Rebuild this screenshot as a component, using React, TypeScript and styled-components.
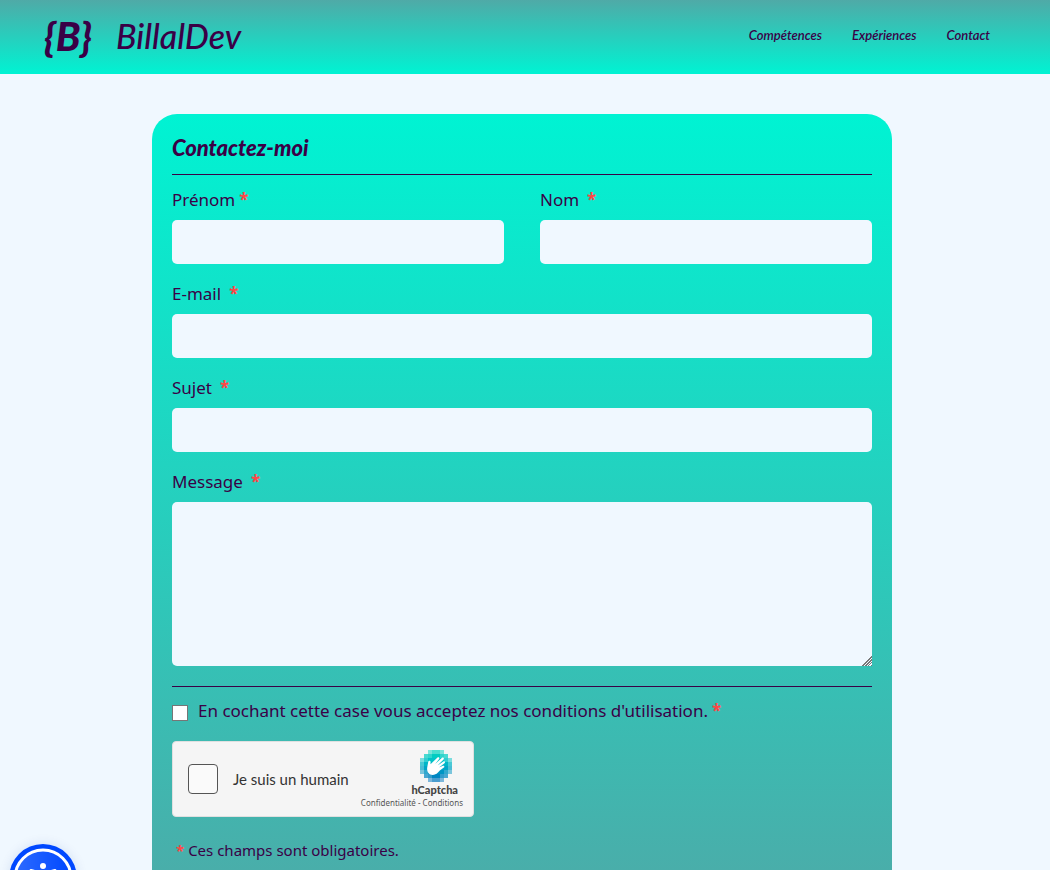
import React from "react";
import styled, { createGlobalStyle } from "styled-components";

const ink = "#3a0046";
const paper = "#f0f8ff";
const mint = "#00f3d3";

const GlobalStyle = createGlobalStyle`
  *, *::before, *::after { box-sizing: border-box; }
  body {
    margin: 0;
    background: ${paper};
    color: ${ink};
    font-family: "Noto Sans", sans-serif;
  }
`;

const Page = styled.div`
  display: flex;
  flex-direction: column;
  min-height: 100vh;
`;

const Header = styled.header`
  display: flex;
  align-items: center;
  justify-content: space-between;
  height: 74px;
  padding: 0 60px 0 44px;
  background: linear-gradient(#4faaa7, ${mint});
  font-family: Lato, sans-serif;
  font-style: italic;
`;

const Brand = styled.a`
  display: flex;
  align-items: center;
  gap: 24px;
  padding-bottom: 2px;
  color: ${ink};
  font-size: 34px;
  line-height: 40px;
  text-decoration: none;
`;

const Monogram = styled.span`
  font-size: 40px;
  font-weight: 900;
`;

const BrandName = styled.span`
  font-weight: 500;
`;

const Nav = styled.nav`
  display: flex;
  gap: 30px;
  padding-bottom: 4px;
`;

const NavLink = styled.a`
  color: ${ink};
  font-size: 13px;
  font-weight: 600;
  line-height: 20px;
  text-decoration: none;
`;

const Main = styled.main`
  display: flex;
  flex: 1;
  justify-content: center;
  padding: 40px 26px 0 20px;
`;

const Form = styled.form`
  width: 100%;
  max-width: 740px;
  padding: 20px 20px 8px;
  border-radius: 25px 25px 0 0;
  background: linear-gradient(${mint}, #49aeaa);
`;

const Title = styled.h1`
  margin: 0;
  padding-bottom: 12px;
  border-bottom: 1px solid ${ink};
  font-family: Lato, sans-serif;
  font-size: 22px;
  font-style: italic;
  font-weight: 900;
  line-height: 28px;
`;

const Fields = styled.div`
  display: grid;
  grid-template-columns: 1fr 1fr;
  gap: 16px 36px;
  padding: 11px 0 20px;
  border-bottom: 1px solid ${ink};
`;

const Field = styled.div<{ $wide?: boolean }>`
  display: flex;
  flex-direction: column;
  gap: 6px;
  grid-column: ${(p) => (p.$wide ? "1 / -1" : "auto")};
`;

const Label = styled.label<{ $gap?: number }>`
  display: flex;
  gap: ${(p) => p.$gap ?? 8}px;
  font-size: 17px;
  line-height: 28px;
`;

const Star = styled.span`
  color: #ff4646;
  font-weight: 700;
`;

const TextInput = styled.input`
  width: 100%;
  height: 44px;
  padding: 0 12px;
  border: 0;
  border-radius: 5px;
  background: ${paper};
  color: ${ink};
  font: inherit;
`;

const TextArea = styled.textarea`
  display: block;
  width: 100%;
  height: 164px;
  padding: 12px;
  border: 0;
  border-radius: 5px;
  background: ${paper};
  color: ${ink};
  font: inherit;
  resize: vertical;
  &::-webkit-resizer {
    background:
      linear-gradient(135deg, ${paper} 63%, transparent 63%),
      repeating-linear-gradient(135deg, #777 0 1px, ${paper} 1px 2px);
  }
`;

const Terms = styled.div`
  display: flex;
  align-items: center;
  gap: 10px;
  padding-top: 12px;
`;

const TermsBox = styled.input`
  appearance: none;
  flex: none;
  width: 16px;
  height: 16px;
  margin: 3px 0 0;
  border: 1px solid #767676;
  background: #fff;
  &:checked { background: ${ink}; }
`;

const TermsLabel = styled.label`
  display: flex;
  gap: 4px;
  font-size: 17px;
  line-height: 24px;
`;

const Captcha = styled.div`
  display: flex;
  align-items: center;
  width: 302px;
  height: 76px;
  margin: 18px 0 22px;
  padding: 0 10px 0 15px;
  border: 1px solid #e0e0e0;
  border-radius: 4px;
  background: #f5f5f5;
  color: #444;
`;

const CaptchaBox = styled.input`
  appearance: none;
  flex: none;
  width: 30px;
  height: 30px;
  margin: 0 15px 0 0;
  border: 1px solid #555;
  border-radius: 4px;
  background: #fafafa;
  &:checked { background: #00838f; }
`;

const CaptchaLabel = styled.label`
  flex: 1;
  font-family: Lato, sans-serif;
  font-size: 15px;
  white-space: nowrap;
  color: #333;
`;

const CaptchaBrand = styled.div`
  display: flex;
  flex-direction: column;
  align-items: flex-end;
  padding-bottom: 2px;
`;

const CaptchaLogo = styled.svg`
  margin-right: 11px;
`;

const CaptchaName = styled.span`
  margin-right: 5px;
  font-family: Lato, sans-serif;
  font-size: 11px;
  font-weight: 900;
  line-height: 16px;
`;

const CaptchaLinks = styled.span`
  font-size: 8px;
  line-height: 9px;
  white-space: nowrap;
`;

const CaptchaLink = styled.a`
  color: #555;
  text-decoration: none;
`;

const Note = styled.p`
  display: flex;
  gap: 4px;
  margin: 0;
  padding-left: 4px;
  font-size: 15px;
  line-height: 22px;
`;

const AccessButton = styled.button`
  position: fixed;
  left: 9px;
  bottom: -42px;
  width: 68px;
  height: 68px;
  padding: 0;
  border: 0;
  border-radius: 50%;
  background: none;
  box-shadow: 0 0 12px rgba(0, 60, 160, 0.12);
`;

/* Opacity of each 4px cell in the round mosaic, 0 meaning no cell. */
const mosaic = [
  [0, 0, 5, 7, 7, 5, 0, 0],
  [0, 7, 8, 10, 10, 8, 7, 0],
  [5, 8, 10, 10, 10, 10, 8, 5],
  [7, 10, 10, 10, 10, 10, 10, 7],
  [7, 10, 10, 10, 10, 10, 10, 7],
  [5, 8, 10, 10, 10, 10, 8, 5],
  [0, 7, 8, 10, 10, 8, 7, 0],
  [0, 0, 5, 7, 7, 5, 0, 0],
];
const rowColours = ["#00d4bf", "#00cdc2", "#00c4c8", "#00b6c8", "#00a5c7", "#0095c4", "#0086c2", "#0078bf"];

function HandLogo() {
  return (
    <CaptchaLogo width="32" height="32" viewBox="0 0 32 32" shapeRendering="auto" aria-hidden="true">
      {mosaic.map((row, y) =>
        row.map((o, x) =>
          o ? <rect key={`${x}-${y}`} x={x * 4} y={y * 4} width="4" height="4" fill={rowColours[y]} opacity={o / 10} /> : null
        )
      )}
      <path
        d="M7.2 17.5 8.3 11.6C8.6 10.2 10.6 10.4 10.6 11.9L10.5 14.2 17.5 7.5C18.6 6.6 20 7.8 19.1 9L15.2 13.9 22 7.8C23.2 6.8 24.6 8.2 23.6 9.4L17.6 15.4 23.4 11.5C24.7 10.8 25.6 12.3 24.5 13.2L19 17.5 22.9 15.8C24.2 15.3 24.9 16.8 23.8 17.6L19.8 20.6C17.6 23.3 15.8 25 12.8 25 8.8 25 6.6 21.8 7.2 17.5Z"
        fill="#fff"
      />
    </CaptchaLogo>
  );
}

function AccessIcon() {
  return (
    <svg width="68" height="68" viewBox="0 0 68 68" aria-hidden="true">
      <defs>
        <linearGradient id="disc" x1="0" y1="0" x2="1" y2="0">
          <stop offset="0" stopColor="#2d6bff" />
          <stop offset="1" stopColor="#0048ff" />
        </linearGradient>
      </defs>
      <circle cx="34" cy="34" r="34" fill="#0048ff" />
      <circle cx="34" cy="34" r="28" fill="url(#disc)" stroke="#fff" strokeWidth="3" />
      <circle cx="34" cy="22" r="3" fill="#fff" />
      <path
        d="M22 26.5 31 29H37L46 26.5M31 29V37L27 49M37 29V37L41 49M31 37H37"
        fill="none"
        stroke="#fff"
        strokeWidth="3"
        strokeLinecap="round"
        strokeLinejoin="round"
      />
    </svg>
  );
}

const fields = [
  { id: "prenom", label: "Prénom", gap: 4, type: "text" },
  { id: "nom", label: "Nom", type: "text" },
  { id: "email", label: "E-mail", wide: true, type: "email" },
  { id: "sujet", label: "Sujet", wide: true, type: "text" },
];

export default function App() {
  return (
    <Page>
      <GlobalStyle />
      <Header>
        <Brand href="#">
          <Monogram>{"{B}"}</Monogram>
          <BrandName>BillalDev</BrandName>
        </Brand>
        <Nav>
          <NavLink href="#competences">Compétences</NavLink>
          <NavLink href="#experiences">Expériences</NavLink>
          <NavLink href="#contact">Contact</NavLink>
        </Nav>
      </Header>
      <Main>
        <Form id="contact">
          <Title>Contactez-moi</Title>
          <Fields>
            {fields.map((f) => (
              <Field key={f.id} $wide={f.wide}>
                <Label htmlFor={f.id} $gap={f.gap}>
                  {f.label}
                  <Star>*</Star>
                </Label>
                <TextInput id={f.id} type={f.type} required />
              </Field>
            ))}
            <Field $wide>
              <Label htmlFor="message">
                Message
                <Star>*</Star>
              </Label>
              <TextArea id="message" required />
            </Field>
          </Fields>
          <Terms>
            <TermsBox id="terms" type="checkbox" required />
            <TermsLabel htmlFor="terms">
              En cochant cette case vous acceptez nos conditions d'utilisation.
              <Star>*</Star>
            </TermsLabel>
          </Terms>
          <Captcha>
            <CaptchaBox id="human" type="checkbox" />
            <CaptchaLabel htmlFor="human">Je suis un humain</CaptchaLabel>
            <CaptchaBrand>
              <HandLogo />
              <CaptchaName>hCaptcha</CaptchaName>
              <CaptchaLinks>
                <CaptchaLink href="#privacy">Confidentialité</CaptchaLink>
                {" - "}
                <CaptchaLink href="#conditions">Conditions</CaptchaLink>
              </CaptchaLinks>
            </CaptchaBrand>
          </Captcha>
          <Note>
            <Star>*</Star>
            Ces champs sont obligatoires.
          </Note>
        </Form>
      </Main>
      <AccessButton type="button">
        <AccessIcon />
      </AccessButton>
    </Page>
  );
}
